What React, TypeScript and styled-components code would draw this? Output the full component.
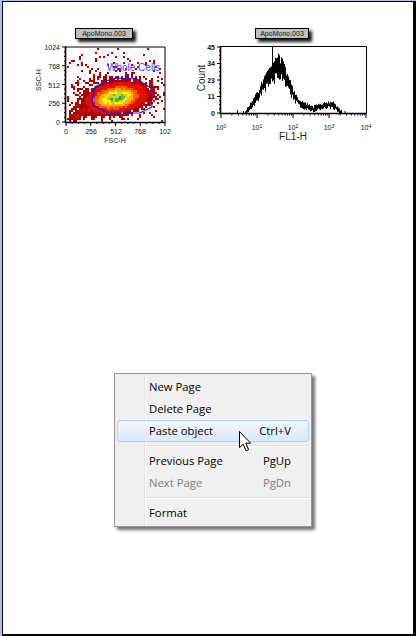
import { useMemo } from 'react';
import styled, { createGlobalStyle } from 'styled-components';

const GlobalStyle = createGlobalStyle`
  html, body {
    margin: 0;
    padding: 0;
    background: #fff;
  }
`;

const WindowEdge = styled.div`
  box-sizing: border-box;
  width: 416px;
  height: 636px;
  border-top: 1px solid #a3c3ea;
  border-left: 2px solid #a3c3ea;
`;

const Sheet = styled.main`
  box-sizing: border-box;
  position: relative;
  height: 635px;
  width: 414px;
  background: #fff;
  border-style: solid;
  border-color: #000;
  border-width: 1px 3px 2px 1px;
  padding: 26px 0 0 29px;
`;

const PlotRow = styled.section`
  display: flex;
  gap: 16px;
`;

const Plot = styled.figure`
  margin: 0;
  display: flex;
  flex-direction: column;
  align-items: center;
  gap: 2px;
`;

const Caption = styled.figcaption<{ $width: number }>`
  box-sizing: border-box;
  width: ${({ $width }) => $width}px;
  height: 11px;
  line-height: 9px;
  background: #c0c0c0;
  border: 1px solid #000;
  box-shadow: 3px 3px 3px rgba(0, 0, 0, 0.9);
  font: 7px/9px 'Liberation Sans', Arial, sans-serif;
  text-align: center;
  color: #111;
`;

const ChartSvg = styled.svg`
  display: block;
  font-family: 'Liberation Sans', Arial, sans-serif;
`;

const Menu = styled.nav`
  box-sizing: border-box;
  position: absolute;
  left: 111px;
  top: 371px;
  width: 198px;
  height: 154px;
  padding: 2px;
  background: #f0f0f0;
  border: 1px solid #979797;
  box-shadow: 3px 3px 3px rgba(0, 0, 0, 0.55);
  font-family: 'Open Sans', 'Noto Sans', sans-serif;
  font-size: 11.3px;
  color: #000;

  &::before {
    content: '';
    position: absolute;
    left: 29px;
    top: 1px;
    bottom: 1px;
    width: 1px;
    background: #e2e3e3;
    box-shadow: 1px 0 0 #fff;
  }
`;

const MenuRow = styled.div<{ $active?: boolean; $disabled?: boolean }>`
  box-sizing: border-box;
  position: relative;
  display: flex;
  justify-content: space-between;
  align-items: center;
  height: 22px;
  padding: 0 17px 2px 31px;
  border: 1px solid ${({ $active }) => ($active ? '#aeCff7' : 'transparent')};
  border-radius: 3px;
  background: ${({ $active }) =>
    $active ? 'linear-gradient(#f2f7fd, #dbe9fa)' : 'transparent'};
  color: ${({ $disabled }) => ($disabled ? '#7f7f7f' : '#000')};
`;

const MenuDivider = styled.div`
  position: relative;
  height: 8px;
  margin-left: 28px;

  &::after {
    content: '';
    position: absolute;
    left: 0;
    right: 0;
    top: 3px;
    height: 1px;
    background: #e0e0e0;
    box-shadow: 0 1px 0 #fff;
  }
`;

const Pointer = styled.svg`
  position: absolute;
  left: 235px;
  top: 428px;
`;

// small seeded generator so the plots come out the same every time
function makeRandom(seed: number) {
  let a = seed;
  return () => {
    a = (a + 0x6d2b79f5) | 0;
    let t = Math.imul(a ^ (a >>> 15), 1 | a);
    t = (t + Math.imul(t ^ (t >>> 7), 61 | t)) ^ t;
    return ((t ^ (t >>> 14)) >>> 0) / 4294967296;
  };
}

function heatColor(d: number) {
  if (d > 1.0) return '#1c8f8a';
  if (d > 0.95) return '#5fb347';
  if (d > 0.87) return '#c8d820';
  if (d > 0.75) return '#fff000';
  if (d > 0.62) return '#ffb000';
  if (d > 0.46) return '#ff5a00';
  if (d > 0.24) return '#e01000';
  return '#b00000';
}

function buildCells() {
  const rand = makeRandom(31);
  const cells: { x: number; y: number; fill: string }[] = [];
  for (let y = 48; y < 122; y += 2) {
    for (let x = 67; x < 164; x += 2) {
      const u = x - 115;
      const v = y - 97 + 0.12 * u;
      const main = Math.exp(-((u * u) / (2 * 18 * 18) + (v * v) / (2 * 9 * 9)));

      // tail running to the lower left corner
      const t = Math.max(0, Math.min(1, ((x - 67) * 33 + (y - 120) * -20) / (33 * 33 + 20 * 20)));
      const lx = 67 + 33 * t;
      const ly = 120 - 20 * t;
      const dist = Math.hypot(x - lx, y - ly);
      const tail = Math.exp(-(dist * dist) / (2 * 5 * 5));

      const sx = (x - 108) / 30;
      const sy = (y - 84) / 20;
      const spread = Math.exp(-(sx * sx + sy * sy) / 2);

      const p = main * 4 + tail * 0.7 + spread * 0.26 + 0.012;
      if (rand() > p) continue;
      const d = Math.max(main * (0.93 + rand() * 0.14), tail * 0.3 * rand());
      cells.push({ x, y, fill: heatColor(d) });
    }
  }
  return cells;
}

const gatePoints =
  '92,100 95,87 106,81 117,78 137,79 151,88 152,107 140,113 107,113 93,105';

const envelope: [number, number][] = [
  [245, 112.5], [250, 106], [257, 97], [262, 87], [267, 78], [272, 73], [278, 67],
  [283, 72], [288, 83], [293, 95], [298, 102], [305, 106], [312, 109], [318, 107],
  [325, 105], [333, 105], [337, 109], [341, 112.5],
];

function envelopeAt(x: number) {
  for (let i = 0; i < envelope.length - 1; i++) {
    const [x0, y0] = envelope[i];
    const [x1, y1] = envelope[i + 1];
    if (x >= x0 && x <= x1) return y0 + ((y1 - y0) * (x - x0)) / (x1 - x0);
  }
  return 113;
}

function buildHistogram() {
  const rand = makeRandom(9);
  let d = '';
  for (let x = 245; x <= 341; x += 1) {
    const mid = envelopeAt(x);
    const spread = 2 + (113 - mid) * 0.2;
    const top = mid - spread * (0.3 + rand() * 0.95);
    const bottom = Math.min(113, mid + spread * (0.3 + rand() * 0.95));
    d += `M${x + 0.5} ${top.toFixed(1)}V${bottom.toFixed(1)}`;
  }
  return d;
}

const scatterTicksY = [
  { y: 47.5, label: '1024' },
  { y: 66, label: '768' },
  { y: 85, label: '512' },
  { y: 103.5, label: '256' },
  { y: 122, label: '0' },
];
const scatterTicksX = [
  { x: 66, label: '0' },
  { x: 91, label: '256' },
  { x: 116, label: '512' },
  { x: 140, label: '768' },
  { x: 165, label: '102' },
];

function ScatterPlot() {
  const cells = useMemo(buildCells, []);
  const minor: number[] = [];
  for (let i = 0; i <= 16; i++) minor.push(i);
  return (
    <ChartSvg width={144} height={105} viewBox="32 41 144 105">
      {cells.map((c, i) => (
        <rect key={i} x={c.x} y={c.y} width={2} height={2} fill={c.fill} />
      ))}
      <polygon points={gatePoints} fill="none" stroke="#1010f0" strokeWidth={1.2} />
      <text x={107} y={71} fontSize={10} fill="#4a3cff">
        Whole Cells
      </text>
      <path d="M66 47H165V122" fill="none" stroke="#000" strokeWidth={1} />
      <path d="M65.5 46.5V122.5H165.5" fill="none" stroke="#000" strokeWidth={1.6} />
      {minor.map(i => (
        <g key={i} stroke="#000" strokeWidth={1}>
          <line x1={66 + i * 6.19} y1={122} x2={66 + i * 6.19} y2={i % 4 === 0 ? 126 : 124} />
          <line x1={66} y1={122 - i * 4.69} x2={i % 4 === 0 ? 62 : 64} y2={122 - i * 4.69} />
        </g>
      ))}
      {scatterTicksY.map(t => (
        <text key={t.label} x={60} y={t.y + 2.5} fontSize={7} textAnchor="end" fill="#111">
          {t.label}
        </text>
      ))}
      {scatterTicksX.map(t => (
        <text key={t.label} x={t.x} y={134} fontSize={7} textAnchor="middle" fill="#111">
          {t.label}
        </text>
      ))}
      <text x={115} y={143} fontSize={7} textAnchor="middle" fill="#222">
        FSC-H
      </text>
      <text
        transform="translate(41 80) rotate(-90)"
        fontSize={7}
        textAnchor="middle"
        fill="#222"
      >
        SSC-H
      </text>
    </ChartSvg>
  );
}

const histTicksY = [
  { y: 47, label: '45' },
  { y: 63.5, label: '34' },
  { y: 80, label: '23' },
  { y: 96.5, label: '11' },
  { y: 113, label: '0' },
];
const decades = [221, 257, 293, 329, 366];

function Histogram() {
  const bars = useMemo(buildHistogram, []);
  const minorX: { x: number; major: boolean }[] = [];
  for (let i = 0; i < 4; i++) {
    for (let k = 1; k < 10; k++) {
      minorX.push({ x: decades[i] + (decades[i + 1] - decades[i]) * Math.log10(k), major: k === 1 });
    }
  }
  minorX.push({ x: 366, major: true });
  const minorY: number[] = [];
  for (let i = 0; i <= 16; i++) minorY.push(i);
  return (
    <ChartSvg width={180} height={105} viewBox="192 41 180 105">
      <path d={bars} stroke="#000" strokeWidth={1} fill="none" />
      <path d="M272.5 47V70M237.5 110V113M243.5 111V113M345 111V113" stroke="#000" strokeWidth={1} />
      <path d="M221 46.5H366.5V113" fill="none" stroke="#000" strokeWidth={1} />
      <path d="M220.5 46V113.5H366.5" fill="none" stroke="#000" strokeWidth={1.6} />
      {minorX.map((t, i) => (
        <line key={i} x1={t.x} y1={113} x2={t.x} y2={t.major ? 118 : 115.5} stroke="#000" strokeWidth={1} />
      ))}
      {minorY.map(i => (
        <line
          key={i}
          x1={221}
          y1={113 - i * 4.125}
          x2={i % 4 === 0 ? 217 : 219}
          y2={113 - i * 4.125}
          stroke="#000"
          strokeWidth={1}
        />
      ))}
      {histTicksY.map(t => (
        <text key={t.label} x={215} y={t.y + 2.5} fontSize={7} fontWeight={700} textAnchor="end" fill="#111">
          {t.label}
        </text>
      ))}
      {decades.map((x, i) => (
        <text key={x} x={x} y={130} fontSize={7} textAnchor="middle" fill="#111">
          10
          <tspan fontSize={5} dy={-2}>
            {i}
          </tspan>
        </text>
      ))}
      <text x={293} y={140} fontSize={10} textAnchor="middle" fill="#222">
        FL1-H
      </text>
      <text
        transform="translate(205 78) rotate(-90)"
        fontSize={10}
        textAnchor="middle"
        fill="#222"
      >
        Count
      </text>
    </ChartSvg>
  );
}

export default function App() {
  return (
    <>
      <GlobalStyle />
      <WindowEdge>
        <Sheet>
          <PlotRow>
            <Plot>
              <Caption $width={58}>ApoMono.003</Caption>
              <ScatterPlot />
            </Plot>
            <Plot>
              <Caption $width={54}>ApoMono.003</Caption>
              <Histogram />
            </Plot>
          </PlotRow>
          <Menu>
            <MenuRow>New Page</MenuRow>
            <MenuRow>Delete Page</MenuRow>
            <MenuRow $active>
              <span>Paste object</span>
              <span>Ctrl+V</span>
            </MenuRow>
            <MenuDivider />
            <MenuRow>
              <span>Previous Page</span>
              <span>PgUp</span>
            </MenuRow>
            <MenuRow $disabled>
              <span>Next Page</span>
              <span>PgDn</span>
            </MenuRow>
            <MenuDivider />
            <MenuRow>Format</MenuRow>
          </Menu>
          <Pointer width={14} height={24} viewBox="0 0 14 24">
            <path
              d="M1.5 1.5V17.5L5.2 14.2L8 20.8L10.6 19.7L7.9 13.2H12.6Z"
              fill="#fff"
              stroke="#000"
              strokeWidth={1}
            />
          </Pointer>
        </Sheet>
      </WindowEdge>
    </>
  );
}
